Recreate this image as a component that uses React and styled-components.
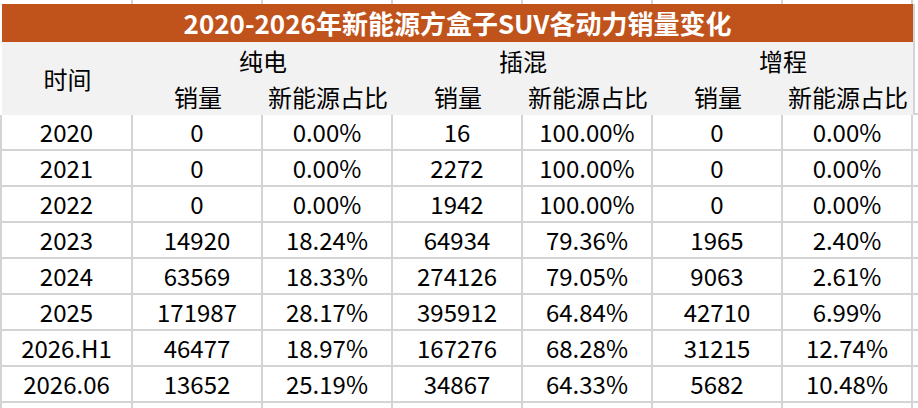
import React from "react";
import styled, { createGlobalStyle } from "styled-components";

const GlobalStyle = createGlobalStyle`
  body {
    margin: 0;
    background: #fff;
    font-family: "Noto Sans CJK SC", "Noto Sans", sans-serif;
    color: #000;
  }
`;

const LINE = "#d4d4d4";

const rows = [
  ["2020", "0", "0.00%", "16", "100.00%", "0", "0.00%"],
  ["2021", "0", "0.00%", "2272", "100.00%", "0", "0.00%"],
  ["2022", "0", "0.00%", "1942", "100.00%", "0", "0.00%"],
  ["2023", "14920", "18.24%", "64934", "79.36%", "1965", "2.40%"],
  ["2024", "63569", "18.33%", "274126", "79.05%", "9063", "2.61%"],
  ["2025", "171987", "28.17%", "395912", "64.84%", "42710", "6.99%"],
  ["2026.H1", "46477", "18.97%", "167276", "68.28%", "31215", "12.74%"],
  ["2026.06", "13652", "25.19%", "34867", "64.33%", "5682", "10.48%"],
];

const groups = ["纯电", "插混", "增程"];

const Sheet = styled.div`
  display: grid;
  grid-template-columns: 131px repeat(6, 130px) 1fr;
  grid-template-rows: 4px 38px 37px 36px repeat(8, 36px) 10px;
  padding-left: 2px;
  width: 918px;
  box-sizing: border-box;
  overflow: hidden;
`;

const Cell = styled.div`
  display: flex;
  align-items: center;
  justify-content: center;
  box-sizing: border-box;
  border-right: 2px solid ${LINE};
  border-bottom: ${(p) => (p.$open ? "none" : `2px solid ${LINE}`)};
  box-shadow: ${(p) => (p.$first ? `-2px 0 0 ${LINE}` : "none")};
  font-size: 24px;
  line-height: 1;
  white-space: nowrap;
`;

const Edge = styled.div`
  box-sizing: border-box;
  border-bottom: ${(p) => (p.$open ? "none" : `2px solid ${LINE}`)};
  grid-column: 8;
  grid-row: ${(p) => p.$row || "auto"};
  border-left: ${(p) => (p.$line ? `2px solid ${LINE}` : "none")};
`;

const Title = styled.div`
  grid-column: 1 / 8;
  grid-row: 2;
  background: #c0531c;
  color: #fff;
  font-weight: 700;
  font-size: 26px;
  display: flex;
  align-items: center;
  justify-content: center;
  line-height: 1;
  letter-spacing: 0;
`;

const Head = styled.div`
  grid-column: ${(p) => p.$col};
  grid-row: ${(p) => p.$row};
  background: #f2f2f2;
  display: flex;
  align-items: center;
  justify-content: center;
  font-size: 24px;
  line-height: 1;
  white-space: nowrap;
`;

export default function App() {
  return (
    <>
      <GlobalStyle />
      <Sheet>
        {Array.from({ length: 7 }).map((_, i) => (
          <Cell key={`t${i}`} $open />
        ))}
        <Edge $open />

        <Title>2020-2026年新能源方盒子SUV各动力销量变化</Title>
        <Edge $row="2 / 5" $line />

        <Head $col="1" $row="3 / 5">时间</Head>
        {groups.map((g, i) => (
          <Head key={g} $col={`${2 + i * 2} / ${4 + i * 2}`} $row="3">
            {g}
          </Head>
        ))}
        {groups.map((g, i) => (
          <React.Fragment key={`s${g}`}>
            <Head $col={`${2 + i * 2}`} $row="4">销量</Head>
            <Head $col={`${3 + i * 2}`} $row="4">新能源占比</Head>
          </React.Fragment>
        ))}

        {rows.map((r) => (
          <React.Fragment key={r[0]}>
            {r.map((v, j) => (
              <Cell key={j} $first={j === 0}>
                {v}
              </Cell>
            ))}
            <Edge />
          </React.Fragment>
        ))}

        {Array.from({ length: 7 }).map((_, i) => (
          <Cell key={`b${i}`} $open $first={i === 0} />
        ))}
        <Edge $open />
      </Sheet>
    </>
  );
}
